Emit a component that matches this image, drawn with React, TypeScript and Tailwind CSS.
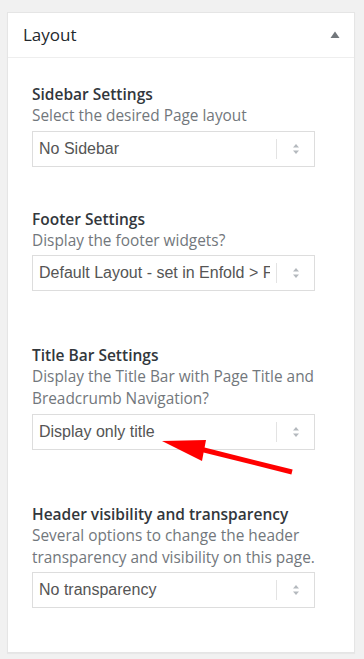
import React from "react"

interface FieldProps {
  label: string
  description: string[]
  value: string
  className?: string
}

const SelectArrows = () => (
  <svg width="8" height="12" viewBox="0 0 8 12" className="block">
    <path d="M4 1 L7 4.5 L1 4.5 Z" fill="#b4b9be" />
    <path d="M4 11 L7 7.5 L1 7.5 Z" fill="#b4b9be" />
  </svg>
)

const Field: React.FC<FieldProps> = ({ label, description, value, className }) => {
  return (
    <div className={className}>
      <div className="text-[15.5px] leading-[22px] font-semibold text-[#32373c]">{label}</div>
      {description.map((line) => (
        <div key={line} className="text-[15.4px] leading-[22px] text-[#72777c]">
          {line}
        </div>
      ))}
      <div className="mt-[3.5px] flex h-[36px] w-[283px] items-center border border-[#dddddd] bg-white">
        <div
          className="w-[237px] overflow-hidden whitespace-nowrap pl-[6px] text-[16px] text-[#555555]"
          style={{ fontFamily: '"Liberation Sans", Arial, sans-serif' }}
        >
          {value}
        </div>
        <div className="ml-[6px] h-[20px] w-px bg-[#e3e3e3]" />
        <div className="flex flex-1 justify-center">
          <SelectArrows />
        </div>
      </div>
    </div>
  )
}

export default function App() {
  return (
    <div
      className="relative min-h-[659px] w-[364px] bg-[#f1f1f1] pt-[12px] pl-[7px]"
      style={{ fontFamily: '"Open Sans", "Noto Sans", sans-serif' }}
    >
      <div className="w-[348px] border border-[#e5e5e5] bg-white shadow-[0_1px_1px_rgba(0,0,0,0.04)]">
        <div className="flex h-[45px] items-center justify-between border-b border-[#eeeeee] pl-[15px] pr-[14px]">
          <span className="text-[17px] text-[#23282d]">Layout</span>
          <svg width="10" height="8" viewBox="0 0 10 8" className="block">
            <path d="M5 0.5 L9.5 7 L0.5 7 Z" fill="#72777c" />
          </svg>
        </div>
        <div className="pl-[24px] pt-[25px] pb-[44px]">
          <Field label="Sidebar Settings" description={["Select the desired Page layout"]} value="No Sidebar" />
          <Field
            className="mt-[41px]"
            label="Footer Settings"
            description={["Display the footer widgets?"]}
            value="Default Layout - set in Enfold > Footer"
          />
          <Field
            className="mt-[53px]"
            label="Title Bar Settings"
            description={["Display the Title Bar with Page Title and", "Breadcrumb Navigation?"]}
            value="Display only title"
          />
          <Field
            className="mt-[53px]"
            label="Header visibility and transparency"
            description={["Several options to change the header", "transparency and visibility on this page."]}
            value="No transparency"
          />
        </div>
      </div>
      <svg className="pointer-events-none absolute left-0 top-0" width="364" height="659" viewBox="0 0 364 659">
        <line x1="196" y1="448" x2="292" y2="472" stroke="#ff0000" strokeWidth="5" />
        <path d="M162 441 L206 440 L202 461 Z" fill="#ff0000" />
      </svg>
    </div>
  )
}
